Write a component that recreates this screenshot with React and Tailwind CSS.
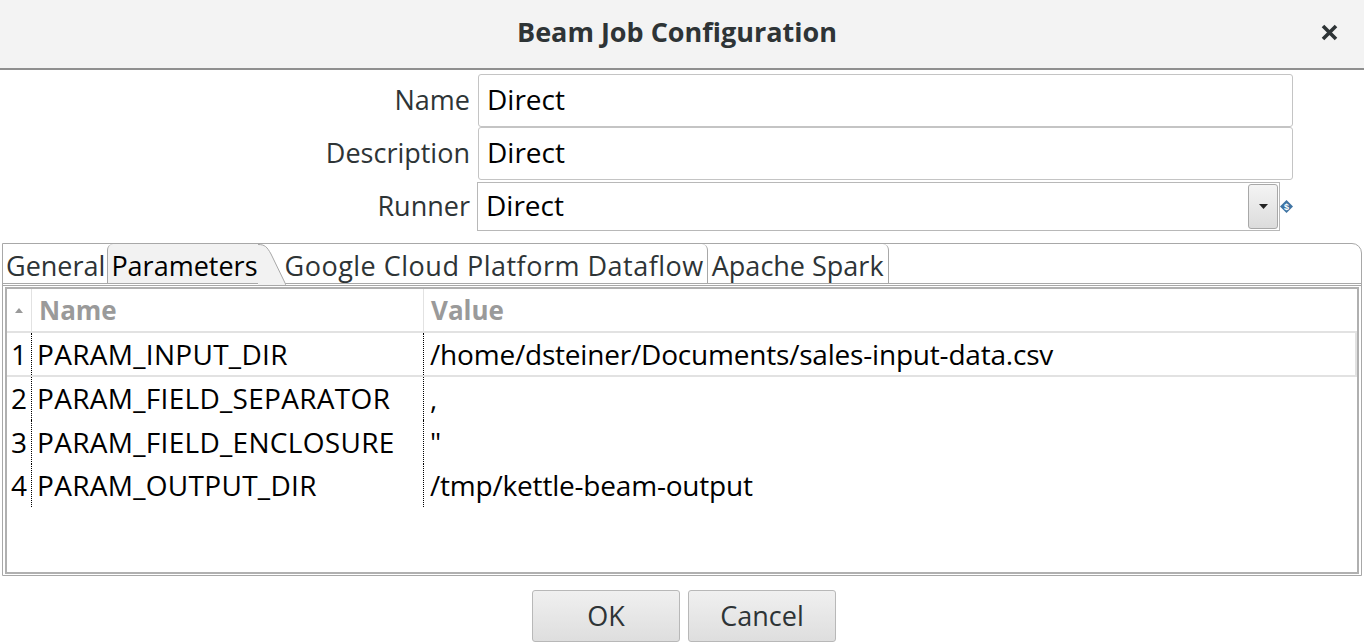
import React from "react";

const font = { fontFamily: '"Open Sans", "Noto Sans", sans-serif' };

const params = [
  { name: "PARAM_INPUT_DIR", value: "/home/dsteiner/Documents/sales-input-data.csv" },
  { name: "PARAM_FIELD_SEPARATOR", value: "," },
  { name: "PARAM_FIELD_ENCLOSURE", value: '"' },
  { name: "PARAM_OUTPUT_DIR", value: "/tmp/kettle-beam-output" },
];

const FieldRow = ({ label, value, combo }) => (
  <div className="flex items-center h-[53px]">
    <div className="w-[478px] pr-[8px] pb-[3px] text-right text-[#2e3436]">{label}</div>
    {combo ? (
      <div className="flex items-center -ml-[1px]">
        <div className="w-[803px] h-[49px] border border-[#b8b8b8] flex items-center justify-between pl-[8px] pr-[1px] text-black">
          <span className="text-[28px] pb-[4px]">{value}</span>
          <div className="w-[30px] h-[45px] rounded-[3px] border border-[#a8a8a8] bg-gradient-to-b from-[#f4f4f4] to-[#dcdcdc] flex items-center justify-center">
            <svg width="9" height="5" viewBox="0 0 9 5"><path d="M0 0h9L4.5 5z" fill="#222" /></svg>
          </div>
        </div>
        <svg width="13" height="13" viewBox="0 0 13 13">
          <path d="M6.5 0L13 6.5 6.5 13 0 6.5z" fill="#3f74a3" />
          <text x="6.5" y="10" fontSize="9" fill="#fff" textAnchor="middle" fontWeight="bold" fontFamily="Liberation Sans, sans-serif">$</text>
        </svg>
      </div>
    ) : (
      <div className="w-[815px] h-[53px] border border-[#c4c4c4] rounded-[3px] flex items-center pl-[8px] pb-[4px] text-black text-[28px]">{value}</div>
    )}
  </div>
);

export default function App() {
  return (
    <div className="w-[1364px] h-[644px] bg-white overflow-hidden text-[27px] leading-none" style={font}>
      {/* title bar */}
      <div className="h-[70px] bg-[#f3f3f3] border-b-2 border-[#8f8f8f] flex items-center justify-center relative pb-[6px]">
        <span className="font-bold text-[27px] text-[#2e3436] -ml-[10px]">Beam Job Configuration</span>
        <svg width="17" height="17" viewBox="0 0 17 17" className="absolute right-[26px] top-[24px]">
          <path d="M2 2L15 15M15 2L2 15" stroke="#2e3436" strokeWidth="3.6" />
        </svg>
      </div>

      {/* form */}
      <div className="pt-[4px] flex flex-col">
        <FieldRow label="Name" value="Direct" />
        <FieldRow label="Description" value="Direct" />
        <FieldRow label="Runner" value="Direct" combo />
      </div>

      {/* tab folder */}
      <div className="mx-[2px] mt-[10px] h-[333px] border border-[#a8a8a8] rounded-tr-[10px] flex flex-col">
        <div className="h-[42px] flex items-stretch border-b-[3px] border-double border-[#a8a8a8] text-[#2e3436]">
          <div className="pl-[3px] pr-[2px] flex items-center pt-[3px]">General</div>
          <div className="flex items-center bg-[#f2f2f2] border-l border-[#a8a8a8] rounded-tl-[6px] pl-[3px] pt-[3px] text-black">
            Parameters
          </div>
          <svg width="28" height="41" viewBox="0 0 28 41" className="shrink-0 -mr-[2px]">
            <path d="M0 0 C7 0 9 3 13 10 L28 41 L0 41 Z" fill="#f2f2f2" />
            <path d="M0 0.5 C7 0.5 9 3 13 10 L28 41" fill="none" stroke="#a8a8a8" strokeWidth="1" />
          </svg>
          <div className="flex items-center pl-[1px] pr-[3px] pt-[3px] border-r border-[#a8a8a8] rounded-tr-[6px] tracking-[0.5px]">
            Google Cloud Platform Dataflow
          </div>
          <div className="flex items-center pl-[4px] pr-[4px] pt-[3px] border-r border-[#a8a8a8] rounded-tr-[6px]">Apache Spark</div>
        </div>

        {/* table */}
        <div className="flex-1 mx-[2px] mb-[1px] mt-[1px] border-2 border-double border-[#b0b0b0] flex flex-col">
          <div className="h-[44px] flex items-center border-b-2 border-[#e2e2e2] text-[#9a9a9a] font-bold text-[26px]">
            <div className="w-[25px] h-full flex items-center justify-center border-r border-[#e2e2e2]">
              <svg width="8" height="5" viewBox="0 0 8 5"><path d="M0 5h8L4 0z" fill="#9a9a9a" /></svg>
            </div>
            <div className="w-[392px] h-full flex items-center pl-[7px] border-r border-[#e2e2e2]">Name</div>
            <div className="flex-1 h-full flex items-center pl-[7px]">Value</div>
          </div>
          {params.map((p, i) => (
            <div
              key={p.name}
              className={`h-[43.5px] flex items-stretch text-black text-[28px] ${i === 0 ? "border-b-2 border-r-2 border-[#e2e2e2]" : ""}`}
            >
              <div className="w-[25px] flex items-center justify-center border-r border-dotted border-black">{i + 1}</div>
              <div className="w-[392px] flex items-center pl-[5px] border-r border-dotted border-black tracking-[0.3px]">{p.name}</div>
              <div className="flex-1 flex items-center pl-[6px] tracking-[-0.2px]">{p.value}</div>
            </div>
          ))}
        </div>
      </div>

      {/* buttons */}
      <div className="flex justify-center gap-[8px] mt-[14px] ml-[4px]">
        <button className="w-[148px] h-[52px] border border-[#b8b8b8] rounded-[3px] bg-gradient-to-b from-[#f0f0f0] to-[#dedede] text-[#2e3436] pb-[1px]" style={font}>OK</button>
        <button className="w-[148px] h-[52px] border border-[#b8b8b8] rounded-[3px] bg-gradient-to-b from-[#f0f0f0] to-[#dedede] text-[#2e3436] pb-[1px]" style={font}>Cancel</button>
      </div>
    </div>
  );
}
